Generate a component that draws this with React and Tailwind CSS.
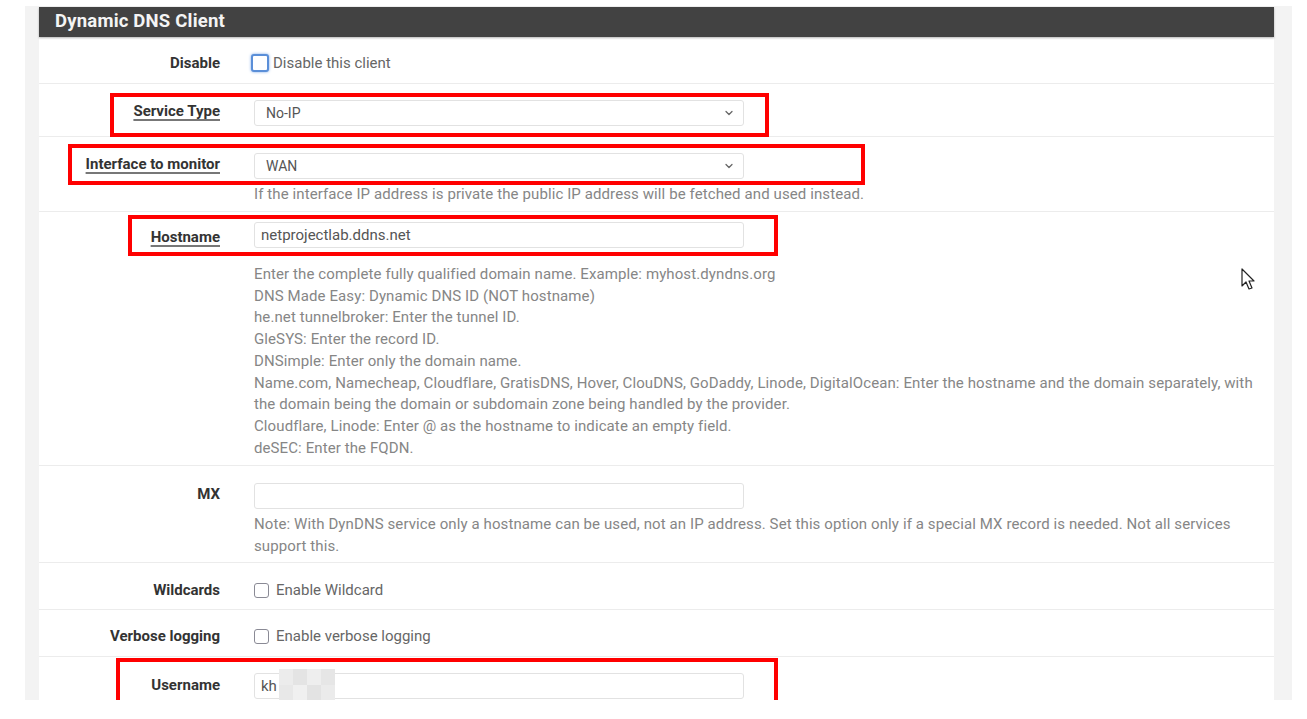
import { ChevronDown } from "lucide-react";

const font = { fontFamily: "Roboto, 'Noto Sans', sans-serif" };

function Label({ children, link, pt = "pt-[2px]" }) {
  return (
    <div className={`w-[197px] shrink-0 pr-[16px] text-right text-[15px] font-bold text-[#333] ${pt}`}>
      <span className={link ? "underline decoration-[#777] decoration-[1.5px] underline-offset-[3px]" : ""}>
        {children}
      </span>
    </div>
  );
}

function Select({ value }) {
  return (
    <div className="flex h-[26px] w-[490px] items-center justify-between rounded-[3px] border border-[#e2e2e2] bg-white pl-[11px] pr-[8px] text-[14px] text-[#555]">
      <span>{value}</span>
      <ChevronDown size={12} strokeWidth={2.5} className="text-[#666]" />
    </div>
  );
}

function Input({ value, children }) {
  return (
    <div className="relative flex h-[26px] w-[490px] items-center rounded-[3px] border border-[#e2e2e2] bg-white pl-[6px] text-[15px] text-[#555]">
      {value}
      {children}
    </div>
  );
}

function Checkbox({ focus }) {
  return (
    <span
      className={
        focus
          ? "inline-block h-[18px] w-[18px] rounded-[3px] border-[2.5px] border-[#5b8fd8] bg-white shadow-[0_0_3px_#7aa7e8]"
          : "inline-block h-[15px] w-[15px] rounded-[3px] border-[1.5px] border-[#8a8a95] bg-white"
      }
    />
  );
}

function Help({ children }) {
  return <div className="text-[15px] leading-[21.7px] tracking-[0.1px] text-[#868686]">{children}</div>;
}

function Row({ children, className = "" }) {
  return <div className={`flex border-b border-[#ececec] ${className}`}>{children}</div>;
}

const hostHelp = [
  "Enter the complete fully qualified domain name. Example: myhost.dyndns.org",
  "DNS Made Easy: Dynamic DNS ID (NOT hostname)",
  "he.net tunnelbroker: Enter the tunnel ID.",
  "GleSYS: Enter the record ID.",
  "DNSimple: Enter only the domain name.",
  "Name.com, Namecheap, Cloudflare, GratisDNS, Hover, ClouDNS, GoDaddy, Linode, DigitalOcean: Enter the hostname and the domain separately, with the domain being the domain or subdomain zone being handled by the provider.",
  "Cloudflare, Linode: Enter @ as the hostname to indicate an empty field.",
  "deSEC: Enter the FQDN.",
];

export default function App() {
  return (
    <div className="relative h-[719px] w-[1307px] overflow-hidden bg-white" style={font}>
      <div className="ml-[25px] mt-[6px] h-[694px] w-[1267px] overflow-hidden bg-[#f3f3f3] pl-[14px] pr-[18px] pt-[1px]">
        <div className="bg-white">
          <div className="flex h-[30px] items-center bg-[#424242] pl-[16px] text-[18.5px] font-bold tracking-[0.2px] text-[#f4f4f4] shadow-[0_1px_2px_rgba(0,0,0,0.3)]">
            Dynamic DNS Client
          </div>

          <Row className="h-[47px] items-center pt-[6px]">
            <Label pt="pt-0">Disable</Label>
            <div className="flex items-center gap-[4px] pl-[15px] text-[15px] text-[#666]">
              <Checkbox focus />
              <span>Disable this client</span>
            </div>
          </Row>

          <Row className="h-[53px] pt-[16px]">
            <Label link pt="pt-0">Service Type</Label>
            <div className="pl-[18px]">
              <Select value="No-IP" />
            </div>
          </Row>

          <Row className="h-[75px] pt-[16px]">
            <Label link pt="pt-0">Interface to monitor</Label>
            <div className="pl-[18px]">
              <Select value="WAN" />
              <div className="mt-[5px]">
                <Help>If the interface IP address is private the public IP address will be fetched and used instead.</Help>
              </div>
            </div>
          </Row>

          <Row className="h-[254px] pt-[10px]">
            <Label link pt="pt-[4px]">Hostname</Label>
            <div className="flex-1 pl-[18px] pr-[13px]">
              <Input value="netprojectlab.ddns.net" />
              <div className="mt-[16px]">
                {hostHelp.map((t) => (
                  <Help key={t}>{t}</Help>
                ))}
              </div>
            </div>
          </Row>

          <Row className="h-[97px] pt-[17px]">
            <Label pt="pt-0">MX</Label>
            <div className="flex-1 pl-[18px] pr-[13px]">
              <Input value="" />
              <div className="mt-[5px]">
                <Help>
                  Note: With DynDNS service only a hostname can be used, not an IP address. Set this option only if a special MX record is needed. Not all services support this.
                </Help>
              </div>
            </div>
          </Row>

          <Row className="h-[47px] items-center pt-[8px]">
            <Label pt="pt-0">Wildcards</Label>
            <div className="flex items-center gap-[7px] pl-[18px] text-[15px] text-[#666]">
              <Checkbox />
              <span>Enable Wildcard</span>
            </div>
          </Row>

          <Row className="h-[47px] items-center pt-[6px]">
            <Label pt="pt-0">Verbose logging</Label>
            <div className="flex items-center gap-[7px] pl-[18px] text-[15px] text-[#666]">
              <Checkbox />
              <span>Enable verbose logging</span>
            </div>
          </Row>

          <div className="flex h-[60px] pt-[16px]">
            <Label pt="pt-[1px]">Username</Label>
            <div className="pl-[18px]">
              <Input value="kh">
                <div className="absolute left-[24px] top-[-5px] grid h-[32px] w-[56px] grid-cols-4 grid-rows-2">
                  <div className="bg-[#ececec]" />
                  <div className="bg-[#e4e4e4]" />
                  <div className="bg-[#eeeeee]" />
                  <div className="bg-[#e6e6e6]" />
                  <div className="bg-[#e8e8e8]" />
                  <div className="bg-[#f0f0f0]" />
                  <div className="bg-[#e3e3e3]" />
                  <div className="bg-[#ebebeb]" />
                </div>
              </Input>
            </div>
          </div>
        </div>
      </div>

      {/* red annotation boxes */}
      <div className="absolute left-[110px] top-[93px] h-[44px] w-[659px] border-[4px] border-[#ff0000]" />
      <div className="absolute left-[68px] top-[144px] h-[41px] w-[797px] border-[4px] border-[#ff0000]" />
      <div className="absolute left-[128px] top-[215px] h-[41px] w-[650px] border-[4px] border-[#ff0000]" />
      <div className="absolute left-[116px] top-[658px] h-[42px] w-[662px] border-[4px] border-b-0 border-[#ff0000]" />

      {/* mouse cursor */}
      <svg className="absolute left-[1241px] top-[268px]" width="16" height="24" viewBox="0 0 16 24">
        <path d="M1 1 L1 18 L5 14 L8 21 L11 20 L8 13 L13 13 Z" fill="white" stroke="#222" strokeWidth="1.2" strokeLinejoin="round" />
      </svg>
    </div>
  );
}
